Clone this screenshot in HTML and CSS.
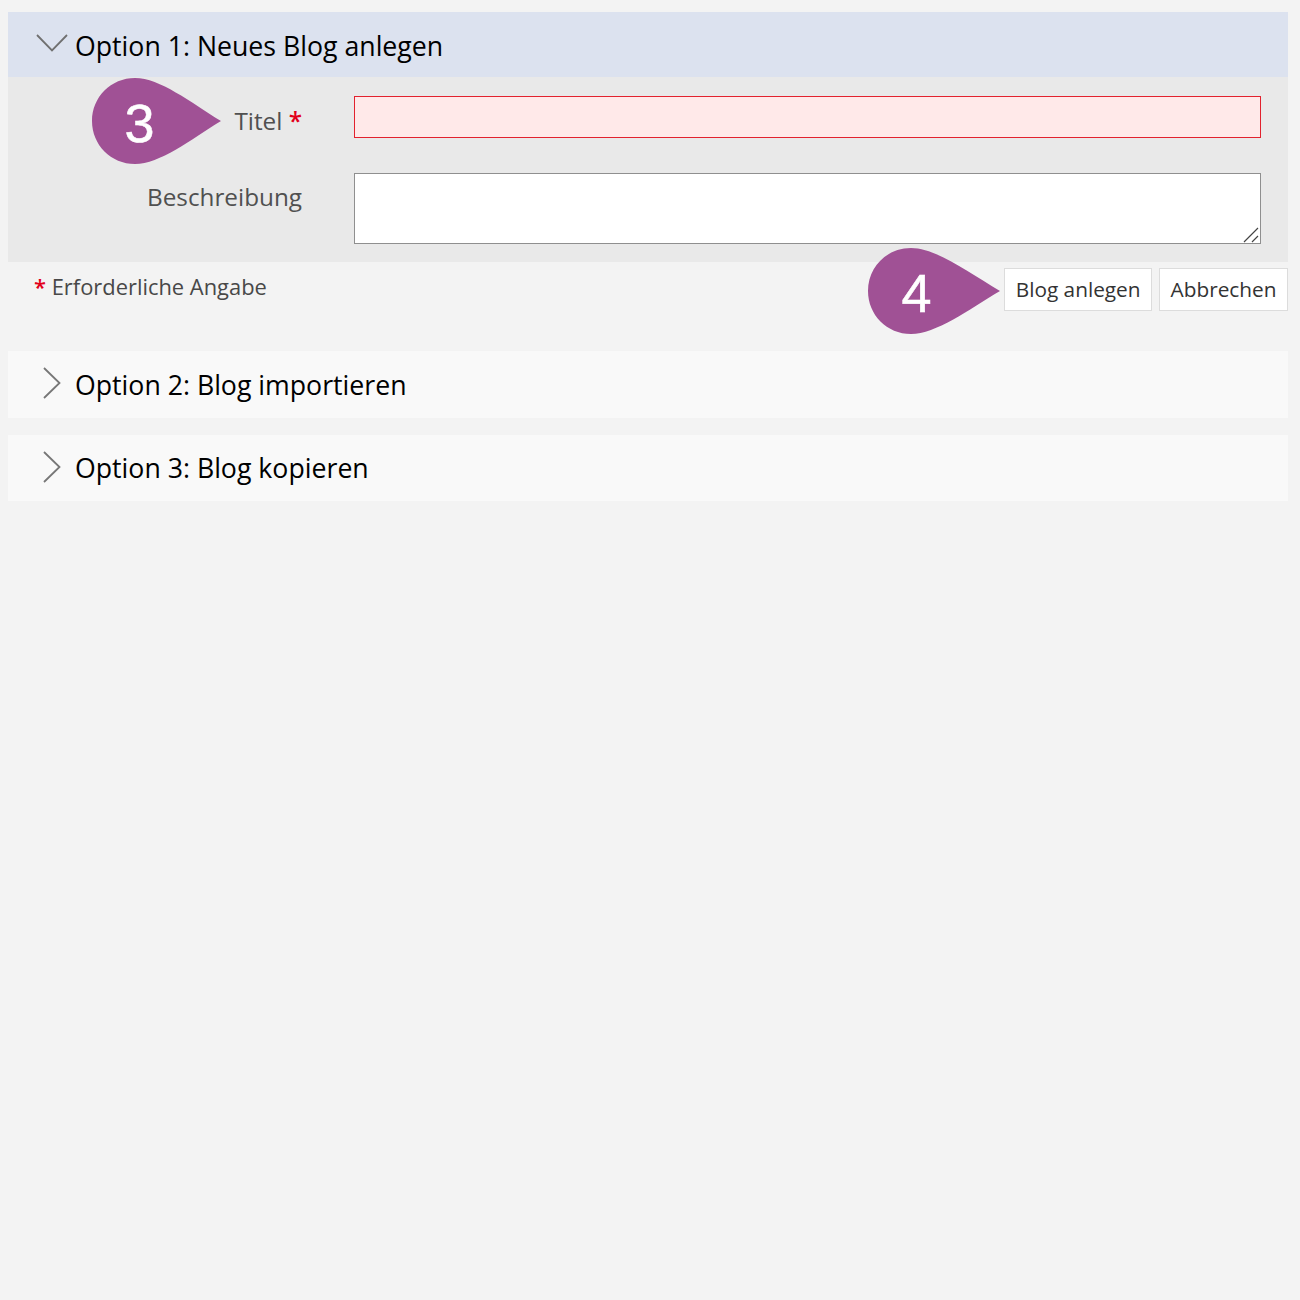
FILE: index.html
```html
<!DOCTYPE html>
<html lang="de">

<head>
  <meta charset="UTF-8">
  <title>Blog anlegen</title>
  <link rel="stylesheet" href="styles.css">
</head>

<body>
  <section class="panel">
    <div class="panel-header open">
      <svg class="chevron-down" width="32" height="20" viewBox="0 0 32 20">
        <path d="M1 1 L16 16.5 L31 1" fill="none" stroke="#707070" stroke-width="1.8" />
      </svg>
      <h2>Option 1: Neues Blog anlegen</h2>
    </div>
    <form class="panel-body">
      <div class="form-row">
        <label for="title" class="title-label">Titel <span class="required">*</span></label>
        <input type="text" id="title" class="invalid">
      </div>
      <div class="form-row">
        <label for="desc">Beschreibung</label>
        <div class="textarea-wrap">
          <textarea id="desc"></textarea>
          <svg class="grip" width="16" height="16" viewBox="0 0 16 16">
            <path d="M1 15 L15 1 M9 15 L15 9" fill="none" stroke="#444" stroke-width="1.2" />
          </svg>
        </div>
      </div>
    </form>
    <div class="panel-footer">
      <p class="hint"><span class="required">*</span> Erforderliche Angabe</p>
      <div class="buttons">
        <button type="button">Blog anlegen</button>
        <button type="button">Abbrechen</button>
      </div>
    </div>
  </section>

  <section class="panel closed">
    <div class="panel-header">
      <svg class="chevron-right" width="20" height="32" viewBox="0 0 20 32">
        <path d="M2 1 L17.5 16 L2 31" fill="none" stroke="#777" stroke-width="1.8" />
      </svg>
      <h2>Option 2: Blog importieren</h2>
    </div>
  </section>

  <section class="panel closed">
    <div class="panel-header">
      <svg class="chevron-right" width="20" height="32" viewBox="0 0 20 32">
        <path d="M2 1 L17.5 16 L2 31" fill="none" stroke="#777" stroke-width="1.8" />
      </svg>
      <h2>Option 3: Blog kopieren</h2>
    </div>
  </section>

  <!-- numbered callouts lying over the form -->
  <div class="callout callout-3">
    <svg width="130" height="86" viewBox="0 0 130 86">
      <path d="M43 0 C68 0 98 24 129 43 C98 62 68 86 43 86 C19 86 0 67 0 43 C0 19 19 0 43 0 Z" fill="#a05195" />
    </svg>
    <span>3</span>
  </div>
  <div class="callout callout-4">
    <svg width="133" height="86" viewBox="0 0 133 86">
      <path d="M43 0 C68 0 100 24 132 43 C100 62 68 86 43 86 C19 86 0 67 0 43 C0 19 19 0 43 0 Z" fill="#a05195" />
    </svg>
    <span>4</span>
  </div>
</body>

</html>
```

FILE: styles.css
```css
body {
  margin: 0;
  padding: 12px 12px 0 8px;
  background-color: #f3f3f3;
  font-family: "Open Sans", sans-serif;
}

h2 {
  margin: 0;
  font-size: 26.7px;
  font-weight: 400;
  color: #000;
}

.panel-header {
  display: flex;
  align-items: center;
  height: 65px;
  background-color: #f9f9f9;
}

.panel-header.open {
  background-color: #dce2ef;
}

.panel-header.open h2 {
  padding-top: 2px;
}

.chevron-down {
  margin-left: 28px;
  margin-right: 7px;
  margin-top: -1px;
}

.chevron-right {
  margin-left: 34px;
  margin-right: 13px;
  margin-top: -2px;
}

.panel-body {
  height: 185px;
  box-sizing: border-box;
  padding-top: 19px;
  background-color: #e9e9e9;
}

.form-row {
  display: flex;
  margin-bottom: 35px;
}

.form-row label {
  width: 294px;
  margin-right: 52px;
  padding-top: 6px;
  text-align: right;
  font-size: 24.3px;
  line-height: 36px;
  color: #505050;
}

.form-row .title-label {
  padding-top: 7px;
  line-height: 35px;
}

.required {
  color: #e2001a;
  font-weight: 600;
}

.textarea-wrap {
  position: relative;
  height: 71px;
}

.grip {
  position: absolute;
  right: 2px;
  bottom: 1px;
}

input,
textarea {
  display: block;
  box-sizing: border-box;
  width: 907px;
  margin: 0;
  padding: 4px;
  border: 1px solid #8f8f8f;
  border-radius: 0;
  background-color: #fff;
}

input {
  height: 42px;
}

textarea {
  height: 71px;
  resize: none;
}

input.invalid {
  border-color: #e2222e;
  background-color: #ffe9e9;
}

.panel-footer {
  display: flex;
  justify-content: space-between;
  height: 89px;
  padding-top: 6px;
  box-sizing: border-box;
}

.hint {
  margin: 0 0 0 26px;
  font-size: 21.9px;
  line-height: 38px;
  color: #484848;
}

.buttons {
  display: flex;
  gap: 7px;
}

button {
  height: 43px;
  padding: 0 10.5px 2px;
  border: 1px solid #dcdcdc;
  border-radius: 0;
  background-color: #fff;
  color: #333;
  font-family: "Open Sans", sans-serif;
  font-size: 20.8px;
}

.closed {
  margin-bottom: 17px;
}

.closed .panel-header {
  height: 66.5px;
}

.callout {
  position: absolute;
  height: 86px;
}

.callout svg {
  display: block;
}

.callout span {
  position: absolute;
  top: 0;
  left: 0;
  width: 95px;
  text-align: center;
  font-family: "Liberation Sans", sans-serif;
  font-size: 54px;
  line-height: 90px;
  color: #fff;
  -webkit-text-stroke: 0.5px #fff;
}

.callout-3 {
  left: 92px;
  top: 78px;
}

.callout-4 {
  left: 868px;
  top: 248px;
}

.callout-4 span {
  left: 1px;
}
```
